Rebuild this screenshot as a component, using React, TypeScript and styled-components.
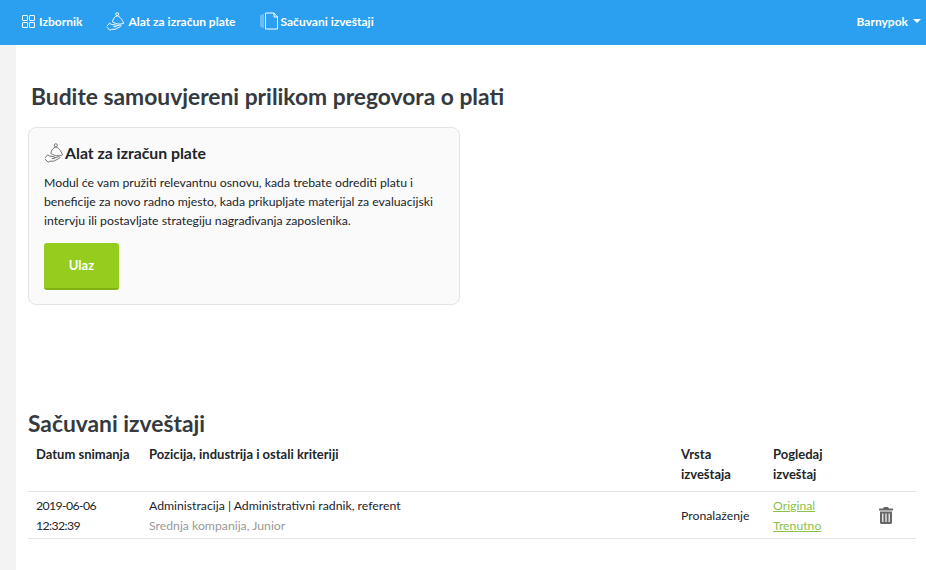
import styled, { createGlobalStyle } from 'styled-components'

const GlobalStyle = createGlobalStyle`
    html, body {
        margin: 0;
        padding: 0;
        background: #fff;
        font-family: Lato, 'Noto Sans', sans-serif;
        color: #212529;
    }
`

function GridIcon() {
    return (
        <svg width="15" height="15" viewBox="0 0 15 15" fill="none" stroke="currentColor" strokeWidth="1">
            <rect x="1.500" y="1.500" width="5" height="5" rx="0.5" />
            <rect x="8.500" y="1.500" width="5" height="5" rx="0.5" />
            <rect x="1.500" y="8.500" width="5" height="5" rx="0.5" />
            <rect x="8.500" y="8.500" width="5" height="5" rx="0.5" />
        </svg>
    )
}

function BellHandIcon({ size = 19 }: { size?: number }) {
    return (
        <svg width={size} height={size} viewBox="0 0 22 22" fill="none" stroke="currentColor" strokeWidth="1.100">
            <circle cx="13" cy="2.500" r="1.700" />
            <path d="M7.500 11.500c.5-3.500 2.500-6.500 5.500-7 3 .5 5.500 4 7.500 8.500-4 1.800-9 1.200-13-1.500z" />
            <path d="M1 16.500l3-3.500 2.500 1.500 4.500.5c1.200.2 1.200 2 0 2h-2.500" />
            <path d="M11 16.500l5-1.500c1.500-.3 1.800 1.200.8 1.800l-6 3.200h-4.300l-2 1.200-3.500-3.700" />
        </svg>
    )
}

function PagesIcon() {
    return (
        <svg width="18" height="18" viewBox="0 0 18 18" fill="none" stroke="currentColor" strokeWidth="1">
            <path d="M1 3v12M3 2v14" opacity="0.6" />
            <path d="M5.500 1v16h12V5l-3.500-4z" />
            <path d="M14 1v4h3.500" />
        </svg>
    )
}

function TrashIcon() {
    return (
        <svg width="14" height="17" viewBox="0 0 14 17" fill="#666">
            <path d="M5 0h4l1 1.500h3.500c.3 0 .5.200.5.500v1.500H0V2c0-.3.200-.5.500-.5H4z" />
            <path
                fillRule="evenodd"
                d="M1 4.500h12v11c0 .8-.7 1.500-1.500 1.500h-9C1.700 17 1 16.300 1 15.500zm2.200 2v8.500h1.200V6.500zm3.200 0v8.500h1.200V6.500zm3.200 0v8.500h1.200V6.500z"
            />
        </svg>
    )
}

function App() {
    return (
        <>
            <GlobalStyle />
            <TopBar>
                <NavList>
                    <NavItem>
                        <GridIcon />
                        Izbornik
                    </NavItem>
                    <NavItem>
                        <BellHandIcon />
                        Alat za izračun plate
                    </NavItem>
                    <NavItem>
                        <PagesIcon />
                        Sačuvani izveštaji
                    </NavItem>
                </NavList>
                <UserMenu>
                    Barnypok
                    <Caret />
                </UserMenu>
            </TopBar>
            <Body>
                <SideStrip />
                <Main>
                    <PageTitle>Budite samouvjereni prilikom pregovora o plati</PageTitle>
                    <ToolCard>
                        <CardTitle>
                            <CardIcon>
                                <BellHandIcon size={20} />
                            </CardIcon>
                            Alat za izračun plate
                        </CardTitle>
                        <CardText>
                            Modul će vam pružiti relevantnu osnovu, kada trebate odrediti platu i beneficije za novo
                            radno mjesto, kada prikupljate materijal za evaluacijski intervju ili postavljate
                            strategiju nagrađivanja zaposlenika.
                        </CardText>
                        <EnterButton>Ulaz</EnterButton>
                    </ToolCard>
                    <SectionTitle>Sačuvani izveštaji</SectionTitle>
                    <ReportTable>
                        <thead>
                            <tr>
                                <HeadCell $width={113}>Datum snimanja</HeadCell>
                                <HeadCell $width={532}>Pozicija, industrija i ostali kriteriji</HeadCell>
                                <HeadCell $width={92}>
                                    Vrsta
                                    <br />
                                    izveštaja
                                </HeadCell>
                                <HeadCell $width={100}>
                                    Pogledaj
                                    <br />
                                    izveštaj
                                </HeadCell>
                                <HeadCell />
                            </tr>
                        </thead>
                        <tbody>
                            <tr>
                                <DateCell>
                                    2019-06-06
                                    <br />
                                    12:32:39
                                </DateCell>
                                <Cell>
                                    Administracija | Administrativni radnik, referent
                                    <br />
                                    <Muted>Srednja kompanija, Junior</Muted>
                                </Cell>
                                <MiddleCell>Pronalaženje</MiddleCell>
                                <Cell>
                                    <ReportLink href="#">Original</ReportLink>
                                    <br />
                                    <ReportLink href="#">Trenutno</ReportLink>
                                </Cell>
                                <TrashCell>
                                    <TrashIcon />
                                </TrashCell>
                            </tr>
                        </tbody>
                    </ReportTable>
                </Main>
            </Body>
        </>
    )
}

export default App

const TopBar = styled.header`
    height: 45px;
    background: #2b9ff0;
    color: #fff;
    display: flex;
    align-items: center;
    justify-content: space-between;
    padding: 0 5px 3px 21px;
    box-sizing: border-box;
    font-size: 12px;
    font-weight: 700;
`

const NavList = styled.nav`
    display: flex;
    align-items: center;
    gap: 24px;
`

const NavItem = styled.a`
    display: flex;
    align-items: center;
    gap: 3px;
    color: #fff;
    white-space: nowrap;
`

const UserMenu = styled.div`
    display: flex;
    align-items: center;
    gap: 5px;
`

const Caret = styled.span`
    width: 0;
    height: 0;
    border-left: 4px solid transparent;
    border-right: 4px solid transparent;
    border-top: 4px solid #fff;
`

const Body = styled.div`
    display: flex;
    height: 525px;
`

const SideStrip = styled.aside`
    width: 16px;
    flex: none;
    background: #f3f3f3;
`

const Main = styled.main`
    flex: 1;
    padding: 0 10px 0 12px;
    min-width: 0;
`

const PageTitle = styled.h1`
    margin: 36px 0 16px 3px;
    font-size: 22.800px;
    line-height: 30px;
    font-weight: 700;
    color: #343a40;
`

const ToolCard = styled.section`
    width: 432px;
    height: 178px;
    box-sizing: border-box;
    padding: 13px 15px 0;
    background: #fafafa;
    border: 1px solid #e3e3e3;
    border-radius: 8px;
`

const CardTitle = styled.h3`
    margin: 0;
    display: flex;
    align-items: center;
    gap: 1px;
    font-size: 15.800px;
    line-height: 24px;
    font-weight: 700;
    color: #212529;
`

const CardIcon = styled.span`
    display: flex;
    color: #777;
`

const CardText = styled.p`
    margin: 8px 0 13px;
    font-size: 12.250px;
    line-height: 19px;
    color: #212529;
`

const EnterButton = styled.button`
    display: block;
    width: 75px;
    height: 47px;
    padding: 0 0 2px;
    border: 0;
    border-bottom: 2px solid #7fb015;
    border-radius: 3px;
    background: #94cd1e;
    color: #fff;
    font-family: inherit;
    font-size: 13px;
    font-weight: 700;
`

const SectionTitle = styled.h2`
    margin: 103px 0 0;
    font-size: 22.800px;
    line-height: 30px;
    font-weight: 700;
    color: #343a40;
`

const ReportTable = styled.table`
    width: 888px;
    border-collapse: collapse;
    table-layout: fixed;
    font-size: 12.250px;
    line-height: 19.500px;
    margin-top: 7px;
`

const HeadCell = styled.th<{ $width?: number }>`
    width: ${(p) => (p.$width ? `${p.$width}px` : 'auto')};
    box-sizing: border-box;
    padding: 0 8px 7px;
    height: 46px;
    text-align: left;
    vertical-align: top;
    font-size: 13px;
    font-weight: 700;
    border-bottom: 1px solid #e3e3e3;
    color: #212529;
`

const Cell = styled.td`
    padding: 4px 8px 3px;
    vertical-align: top;
    border-bottom: 1px solid #e3e3e3;
`

const DateCell = styled(Cell)`
    letter-spacing: -0.6px;
`

const MiddleCell = styled(Cell)`
    vertical-align: middle;
`

const TrashCell = styled(MiddleCell)`
    padding: 6px 0 0 14px;
`

const Muted = styled.span`
    color: #999;
`

const ReportLink = styled.a`
    color: #8bc34a;
    text-decoration: underline;
`
